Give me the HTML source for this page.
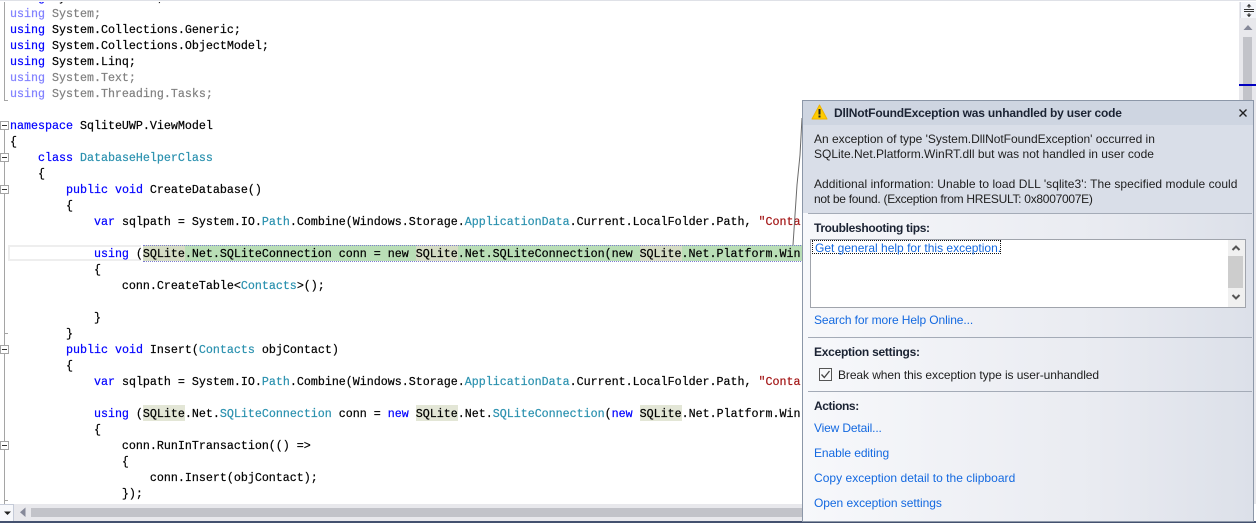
<!DOCTYPE html>
<html><head><meta charset="utf-8"><style>
html,body{margin:0;padding:0;background:#fff}
#root{position:relative;width:1256px;height:523px;overflow:hidden;background:#fff}
#root div,#root svg{position:absolute}
.l{left:10px;height:16px;margin-top:1px;font:11.67px/16px "Liberation Mono",monospace;white-space:pre;color:#000;width:800px;-webkit-text-stroke:.2px}
.k{color:#0000ff}.t{color:#2b91af}.s{color:#a31515}
.f{color:#808080}.f .k{color:#8080ff}
.h{background:#e3e6d6;height:16px}
.d{font:12px/15px "Liberation Sans",sans-serif;margin-top:1px;color:#1e1e1e;white-space:pre}
.b{font-weight:bold;color:#1b2333}
.a{color:#1469e0}
.fb{left:0;width:7px;height:7px;border:1px solid #a5a5a5;background:#fff}
.fb:after{content:"";position:absolute;left:1px;top:3px;width:5px;height:1px;background:#333}
.sep{left:808px;width:444px;height:1px;background:#a4abb7}
</style></head><body><div id="root">

<div style="left:143px;top:245px;width:660px;height:16px;background:#b9deb6"></div>
<div style="left:143px;top:245px;width:42px;height:16px;background:#d5dcc4"></div>
<div style="left:416px;top:245px;width:42px;height:16px;background:#d5dcc4"></div>
<div style="left:640px;top:245px;width:42px;height:16px;background:#d5dcc4"></div>
<div style="left:143px;top:245px;width:660px;height:15px;border-top:1px dotted #7d7dd0;border-bottom:1px dotted #7d7dd0;box-sizing:content-box"></div>
<div style="left:8px;top:245px;width:131px;height:12px;border:2px solid #eeeeee;border-right:0"></div>
<div class="h" style="left:143px;top:405px;width:42px"></div>
<div class="h" style="left:416px;top:405px;width:42px"></div>
<div class="h" style="left:640px;top:405px;width:42px"></div>

<div class="l" style="top:-11px"><span class="k">using</span> System.Data.Net;</div>
<div style="left:0;top:0;width:1256px;height:2px;background:#fff"></div>
<div style="left:0;top:0;width:1256px;height:1px;background:#dfe1e7"></div>
<div class="l f" style="top:5px"><span class="k">using</span> System;</div>
<div class="l" style="top:21px"><span class="k">using</span> System.Collections.Generic;</div>
<div class="l" style="top:37px"><span class="k">using</span> System.Collections.ObjectModel;</div>
<div class="l" style="top:53px"><span class="k">using</span> System.Linq;</div>
<div class="l f" style="top:69px"><span class="k">using</span> System.Text;</div>
<div class="l f" style="top:85px"><span class="k">using</span> System.Threading.Tasks;</div>
<div class="l" style="top:117px"><span class="k">namespace</span> SqliteUWP.ViewModel</div>
<div class="l" style="top:133px">{</div>
<div class="l" style="top:149px">    <span class="k">class</span> <span class="t">DatabaseHelperClass</span></div>
<div class="l" style="top:165px">    {</div>
<div class="l" style="top:181px">        <span class="k">public</span> <span class="k">void</span> CreateDatabase()</div>
<div class="l" style="top:197px">        {</div>
<div class="l" style="top:213px">            <span class="k">var</span> sqlpath = System.IO.<span class="t">Path</span>.Combine(Windows.Storage.<span class="t">ApplicationData</span>.Current.LocalFolder.Path, <span class="s">"Conta</span></div>
<div class="l" style="top:245px">            <span class="k">using</span> (SQLite.Net.SQLiteConnection conn = new SQLite.Net.SQLiteConnection(new SQLite.Net.Platform.Win</div>
<div class="l" style="top:261px">            {</div>
<div class="l" style="top:277px">                conn.CreateTable&lt;<span class="t">Contacts</span>&gt;();</div>
<div class="l" style="top:309px">            }</div>
<div class="l" style="top:325px">        }</div>
<div class="l" style="top:341px">        <span class="k">public</span> <span class="k">void</span> Insert(<span class="t">Contacts</span> objContact)</div>
<div class="l" style="top:357px">        {</div>
<div class="l" style="top:373px">            <span class="k">var</span> sqlpath = System.IO.<span class="t">Path</span>.Combine(Windows.Storage.<span class="t">ApplicationData</span>.Current.LocalFolder.Path, <span class="s">"Conta</span></div>
<div class="l" style="top:405px">            <span class="k">using</span> (SQLite.Net.<span class="t">SQLiteConnection</span> conn = <span class="k">new</span> SQLite.Net.<span class="t">SQLiteConnection</span>(<span class="k">new</span> SQLite.Net.Platform.Win</div>
<div class="l" style="top:421px">            {</div>
<div class="l" style="top:437px">                conn.RunInTransaction(() =&gt;</div>
<div class="l" style="top:453px">                {</div>
<div class="l" style="top:469px">                    conn.Insert(objContact);</div>
<div class="l" style="top:485px">                });</div>

<div style="left:4px;top:2px;width:1px;height:98px;background:#a5a5a5"></div>
<div style="left:4px;top:100px;width:4px;height:1px;background:#a5a5a5"></div>
<div style="left:4px;top:130px;width:1px;height:374px;background:#a5a5a5"></div>
<div style="left:4px;top:333px;width:4px;height:1px;background:#a5a5a5"></div>
<div style="left:4px;top:500px;width:4px;height:1px;background:#a5a5a5"></div>
<div class="fb" style="top:121px"></div>
<div class="fb" style="top:153px"></div>
<div class="fb" style="top:185px"></div>
<div class="fb" style="top:345px"></div>
<div class="fb" style="top:441px"></div>

<div style="left:1239px;top:2px;width:17px;height:502px;background:#e8e8ec"></div>
<div style="left:1240px;top:2px;width:16px;height:16px;background:#f3f5fa;border-left:1px solid #d5d9e2;box-sizing:border-box"></div>
<svg style="left:1243px;top:3px" width="13" height="15" viewBox="0 0 13 15"><path d="M1 6.500H11M1 8.500H11" stroke="#333" fill="none"/><path d="M6 1V5M6 10V14" stroke="#333"/><path d="M3.500 3.500L6 1L8.500 3.500ZM3.500 11.500L6 14L8.500 11.500Z" fill="#333"/></svg>
<svg style="left:1243px;top:23px" width="10" height="8" viewBox="0 0 10 8"><path d="M0.500 7L5 2L9.500 7Z" fill="#868999"/></svg>
<div style="left:1243px;top:37px;width:9px;height:70px;background:#c2c3c9"></div>
<div style="left:1239px;top:84px;width:17px;height:2px;background:#0000c0"></div>

<div style="left:0;top:504px;width:810px;height:17px;background:#e8e8ec"></div>
<div style="left:0;top:504px;width:13px;height:16px;background:#f7f8fb;border-right:1px solid #c5cbd8;border-top:1px solid #c5cbd8"></div>
<svg style="left:3px;top:510px" width="9" height="6" viewBox="0 0 9 6"><path d="M1 1.500H8L4.500 5Z" fill="#222"/></svg>
<svg style="left:19px;top:507px" width="8" height="11" viewBox="0 0 8 11"><path d="M6.500 0.500V10L1 5.250Z" fill="#868999"/></svg>
<div style="left:31px;top:508px;width:775px;height:9px;background:#c2c3c9"></div>
<div style="left:0;top:521px;width:1256px;height:2px;background:#44516f"></div>

<svg style="left:788px;top:115px" width="18" height="134" viewBox="0 0 18 134"><path d="M14 3L12 40L9 70L7 100L5 130" stroke="#6a6a6a" fill="none"/></svg>

<div style="left:802px;top:100px;width:452px;height:422px;box-sizing:border-box;border:1px solid #8c97a8;background:linear-gradient(90deg,#f7f8fb 0%,#e9ebf1 65%,#dce0e9 100%)"></div>
<div style="left:803px;top:101px;width:450px;height:24px;background:#ced5e1"></div>
<div style="left:803px;top:125px;width:450px;height:88px;background:#d9dee8"></div>
<div class="sep" style="top:213px"></div>
<div class="sep" style="top:337px"></div>
<div class="sep" style="top:391px"></div>

<svg style="left:811px;top:104px" width="17" height="16" viewBox="0 0 17 16"><path d="M8.500 1L16 15H1Z" fill="#ffcc00" stroke="#f0b400" stroke-linejoin="round"/><path d="M8.500 5V10.500" stroke="#222" stroke-width="2"/><rect x="7.500" y="11.500" width="2" height="2" fill="#222"/></svg>
<div class="d b" style="left:834px;top:105px;letter-spacing:-.19px">DllNotFoundException was unhandled by user code</div>
<svg style="left:1238px;top:108px" width="10" height="10" viewBox="0 0 10 10"><path d="M1.500 1.500L8.500 8.500M8.500 1.500L1.500 8.500" stroke="#222" stroke-width="1.400"/></svg>

<div class="d" style="left:814px;top:131px;letter-spacing:-.02px">An exception of type 'System.DllNotFoundException' occurred in</div>
<div class="d" style="left:814px;top:146px">SQLite.Net.Platform.WinRT.dll but was not handled in user code</div>
<div class="d" style="left:814px;top:176px;letter-spacing:.05px">Additional information: Unable to load DLL 'sqlite3': The specified module could</div>
<div class="d" style="left:814px;top:191px;letter-spacing:-.28px">not be found. (Exception from HRESULT: 0x8007007E)</div>

<div class="d b" style="left:814px;top:220px;letter-spacing:-.33px">Troubleshooting tips:</div>
<div style="left:810px;top:239px;width:436px;height:69px;box-sizing:border-box;border:1px solid #a0a4ac;background:#fff"></div>
<div style="left:1228px;top:240px;width:17px;height:67px;background:#f0f0f0"></div>
<div style="left:1228px;top:256px;width:15px;height:32px;background:#cdcdcd"></div>
<svg style="left:1231px;top:244px" width="10" height="8" viewBox="0 0 10 8"><path d="M1.500 6L5 2.500L8.500 6" stroke="#555" stroke-width="2" fill="none"/></svg>
<svg style="left:1231px;top:293px" width="10" height="8" viewBox="0 0 10 8"><path d="M1.500 2L5 5.500L8.500 2" stroke="#555" stroke-width="2" fill="none"/></svg>
<div style="left:812px;top:240px;width:189px;height:14px;outline:1px dotted #111;outline-offset:-1px"></div>
<div class="d a" style="left:815px;top:240px">Get general help for this exception.</div>
<div class="d a" style="left:814px;top:312px;letter-spacing:-.1px">Search for more Help Online...</div>

<div class="d b" style="left:814px;top:344px;letter-spacing:-.26px">Exception settings:</div>
<div style="left:819px;top:368px;width:13px;height:13px;box-sizing:border-box;border:1px solid #555;background:#f7f8fb"></div>
<svg style="left:819px;top:368px" width="13" height="13" viewBox="0 0 13 13"><path d="M2.500 6.500L5.300 9.500L10.500 3" stroke="#444" stroke-width="1.300" fill="none"/></svg>
<div class="d" style="left:838px;top:367px;letter-spacing:-.08px">Break when this exception type is user-unhandled</div>

<div class="d b" style="left:814px;top:398px;letter-spacing:-.4px">Actions:</div>
<div class="d a" style="left:814px;top:420px;letter-spacing:-.15px">View Detail...</div>
<div class="d a" style="left:814px;top:445px;letter-spacing:-.07px">Enable editing</div>
<div class="d a" style="left:814px;top:470px;letter-spacing:.03px">Copy exception detail to the clipboard</div>
<div class="d a" style="left:814px;top:495px;letter-spacing:-.04px">Open exception settings</div>
</div></body></html>
